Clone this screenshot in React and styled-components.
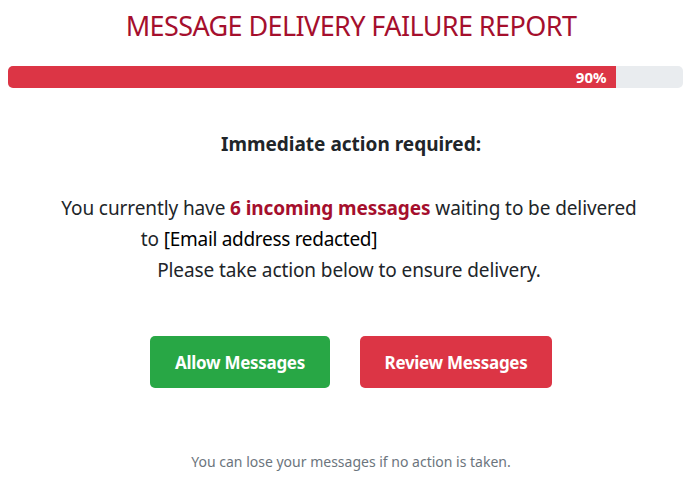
import React from "react";
import styled, { createGlobalStyle } from "styled-components";

const Global = createGlobalStyle`
  html, body { margin: 0; padding: 0; background: #fff; }
  body { font-family: "Noto Sans", "Open Sans", sans-serif; color: #212529; }
`;

const Page = styled.div`
  width: 698px;
  height: 501px;
  box-sizing: border-box;
  padding-top: 8px;
  display: flex;
  flex-direction: column;
  align-items: center;
  overflow: hidden;
`;

const Title = styled.h1`
  margin: 0;
  font-weight: 400;
  font-size: 27px;
  line-height: 36px;
  color: #a50f2d;
  letter-spacing: -0.6px;
  text-align: center;
  padding-left: 4px;
`;

const Track = styled.div`
  align-self: stretch;
  margin: 22px 15px 0 8px;
  height: 22px;
  background: #e9ecef;
  border-radius: 5px;
  overflow: hidden;
  display: flex;
`;

const Fill = styled.div`
  background: #dc3545;
  height: 100%;
  display: flex;
  align-items: center;
  justify-content: flex-end;
  padding-right: 9px;
  box-sizing: border-box;
  color: #fff;
  font-weight: 700;
  font-size: 15px;
  letter-spacing: 0px;
`;

const Heading = styled.div`
  margin-top: 43px;
  font-weight: 700;
  font-size: 19px;
  line-height: 26px;
  color: #212529;
  padding-left: 4px;
`;

const Body = styled.div`
  margin-top: 36px;
  text-align: center;
  font-size: 19px;
  line-height: 31px;
  color: #212529;
  letter-spacing: -0.1px;
`;

const Strong = styled.strong`
  color: #a50f2d;
  font-weight: 700;
`;

const Line = styled.div``;

const Redacted = styled.span`
  font-family: "Noto Sans", sans-serif;
  color: #000;
  font-size: 19px;
  letter-spacing: -0.3px;
`;

const Spacer = styled.span`
  display: inline-block;
  width: ${(p) => p.w}px;
`;

const Buttons = styled.div`
  margin-top: 50px;
  display: flex;
  gap: 30px;
  padding-left: 4px;
`;

const Button = styled.button`
  height: 52px;
  width: ${(p) => p.w}px;
  border: none;
  border-radius: 5px;
  background: ${(p) => p.bg};
  color: #fff;
  font-family: "Noto Sans", sans-serif;
  font-weight: 700;
  font-size: 17px;
  letter-spacing: -0.3px;
  cursor: pointer;
`;

const Note = styled.div`
  margin-top: 64px;
  font-size: 14px;
  color: #6c757d;
  padding-left: 4px;
`;

export default function App() {
  return (
    <>
      <Global />
      <Page>
        <Title>MESSAGE DELIVERY FAILURE REPORT</Title>
        <Track>
          <Fill style={{ width: "90%" }}>90%</Fill>
        </Track>
        <Heading>Immediate action required:</Heading>
        <Body>
          <Line>
            You currently have <Strong>6 incoming messages</Strong> waiting to be delivered
          </Line>
          <Line>
            to <Redacted>[Email address redacted]</Redacted>
            <Spacer w={180} />
          </Line>
          <Line>Please take action below to ensure delivery.</Line>
        </Body>
        <Buttons>
          <Button w={180} bg="#28a745">Allow Messages</Button>
          <Button w={192} bg="#dc3545">Review Messages</Button>
        </Buttons>
        <Note>You can lose your messages if no action is taken.</Note>
      </Page>
    </>
  );
}
